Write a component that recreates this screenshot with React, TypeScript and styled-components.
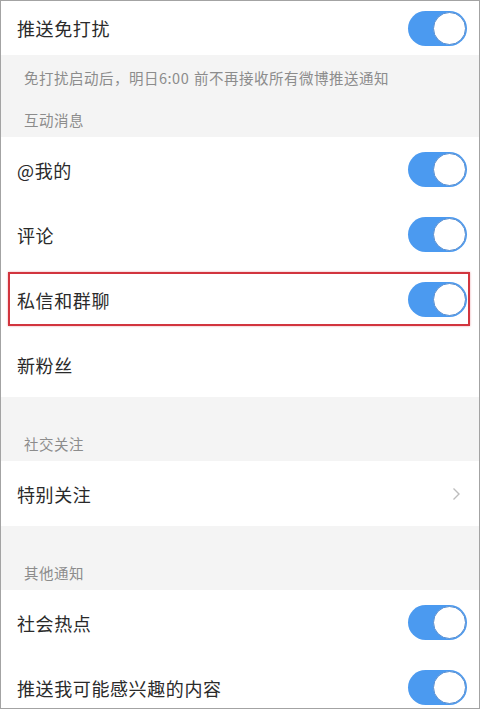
import React from 'react';
import styled, { createGlobalStyle } from 'styled-components';

const GlobalStyle = createGlobalStyle`
    html, body {
        margin: 0;
        padding: 0;
        background: #ffffff;
    }
    body {
        font-family: 'Noto Sans CJK SC', 'Noto Sans', sans-serif;
    }
`;

const Frame = styled.div`
    box-sizing: border-box;
    width: 480px;
    height: 709px;
    border: 1px solid #a3a3a3;
    background: #f4f4f4;
    overflow: hidden;
`;

const Row = styled.div<{ $h?: number; $marked?: boolean }>`
    position: relative;
    box-sizing: border-box;
    height: ${(p) => p.$h ?? 65}px;
    display: flex;
    align-items: center;
    justify-content: space-between;
    padding: 0 12px 0 16px;
    background: #ffffff;

    ${(p) =>
        p.$marked &&
        `
        &::after {
            content: '';
            position: absolute;
            left: 7px;
            right: 9px;
            top: 5px;
            bottom: 6px;
            border: 2px solid #d2353e;
            box-shadow: 0 0 2px rgba(210, 53, 62, 0.45);
            pointer-events: none;
        }
    `}
`;

const Label = styled.span`
    font-size: 18px;
    line-height: 24px;
    color: #2a2a2a;
    letter-spacing: 0.6px;
`;

const Note = styled.div`
    box-sizing: border-box;
    height: 45px;
    display: flex;
    align-items: center;
    padding: 0 0 0 23px;
    font-size: 14.5px;
    color: #8c8c8c;
    letter-spacing: 0.5px;
    word-spacing: 1px;
`;

const GroupTitle = styled.div<{ $h: number }>`
    box-sizing: border-box;
    height: ${(p) => p.$h}px;
    display: flex;
    align-items: flex-end;
    padding: 0 0 7px 23px;
    font-size: 14.5px;
    line-height: 20px;
    color: #8c8c8c;
    letter-spacing: 0.5px;
`;

const Track = styled.span<{ $on: boolean }>`
    position: relative;
    box-sizing: border-box;
    width: 59px;
    height: 35px;
    border-radius: 18px;
    background: ${(p) => (p.$on ? '#4b9af0' : '#e6e6e6')};
    flex-shrink: 0;
`;

const Knob = styled.span<{ $on: boolean }>`
    position: absolute;
    top: 1px;
    ${(p) => (p.$on ? 'right: 1px;' : 'left: 1px;')}
    box-sizing: border-box;
    width: 33px;
    height: 33px;
    border-radius: 50%;
    background: #ffffff;
    border: 1.5px solid #5a8fd0;
`;

const Chevron = styled.svg`
    width: 9px;
    height: 14px;
    margin-right: 6px;
`;

const Toggle = ({ on = true }: { on?: boolean }) => (
    <Track $on={on}>
        <Knob $on={on} />
    </Track>
);

const Arrow = () => (
    <Chevron viewBox="0 0 9 14">
        <path d="M1.5 1.5 L7 7 L1.5 12.5" fill="none" stroke="#bdbdbd" strokeWidth="1.4" />
    </Chevron>
);

const interactive = [
    { label: '@我的', on: true },
    { label: '评论', on: true },
    { label: '私信和群聊', on: true, marked: true },
    { label: '新粉丝' },
];

const others = [
    { label: '社会热点', on: true },
    { label: '推送我可能感兴趣的内容', on: true },
];

export default function App() {
    return (
        <>
            <GlobalStyle />
            <Frame>
                <Row $h={54}>
                    <Label>推送免打扰</Label>
                    <Toggle />
                </Row>
                <Note>免打扰启动后，明日6:00 前不再接收所有微博推送通知</Note>
                <GroupTitle $h={37}>互动消息</GroupTitle>
                {interactive.map((item) => (
                    <Row key={item.label} $marked={item.marked}>
                        <Label>{item.label}</Label>
                        {item.on && <Toggle />}
                    </Row>
                ))}
                <GroupTitle $h={64}>社交关注</GroupTitle>
                <Row>
                    <Label>特别关注</Label>
                    <Arrow />
                </Row>
                <GroupTitle $h={64}>其他通知</GroupTitle>
                {others.map((item) => (
                    <Row key={item.label}>
                        <Label>{item.label}</Label>
                        <Toggle on={item.on} />
                    </Row>
                ))}
            </Frame>
        </>
    );
}
